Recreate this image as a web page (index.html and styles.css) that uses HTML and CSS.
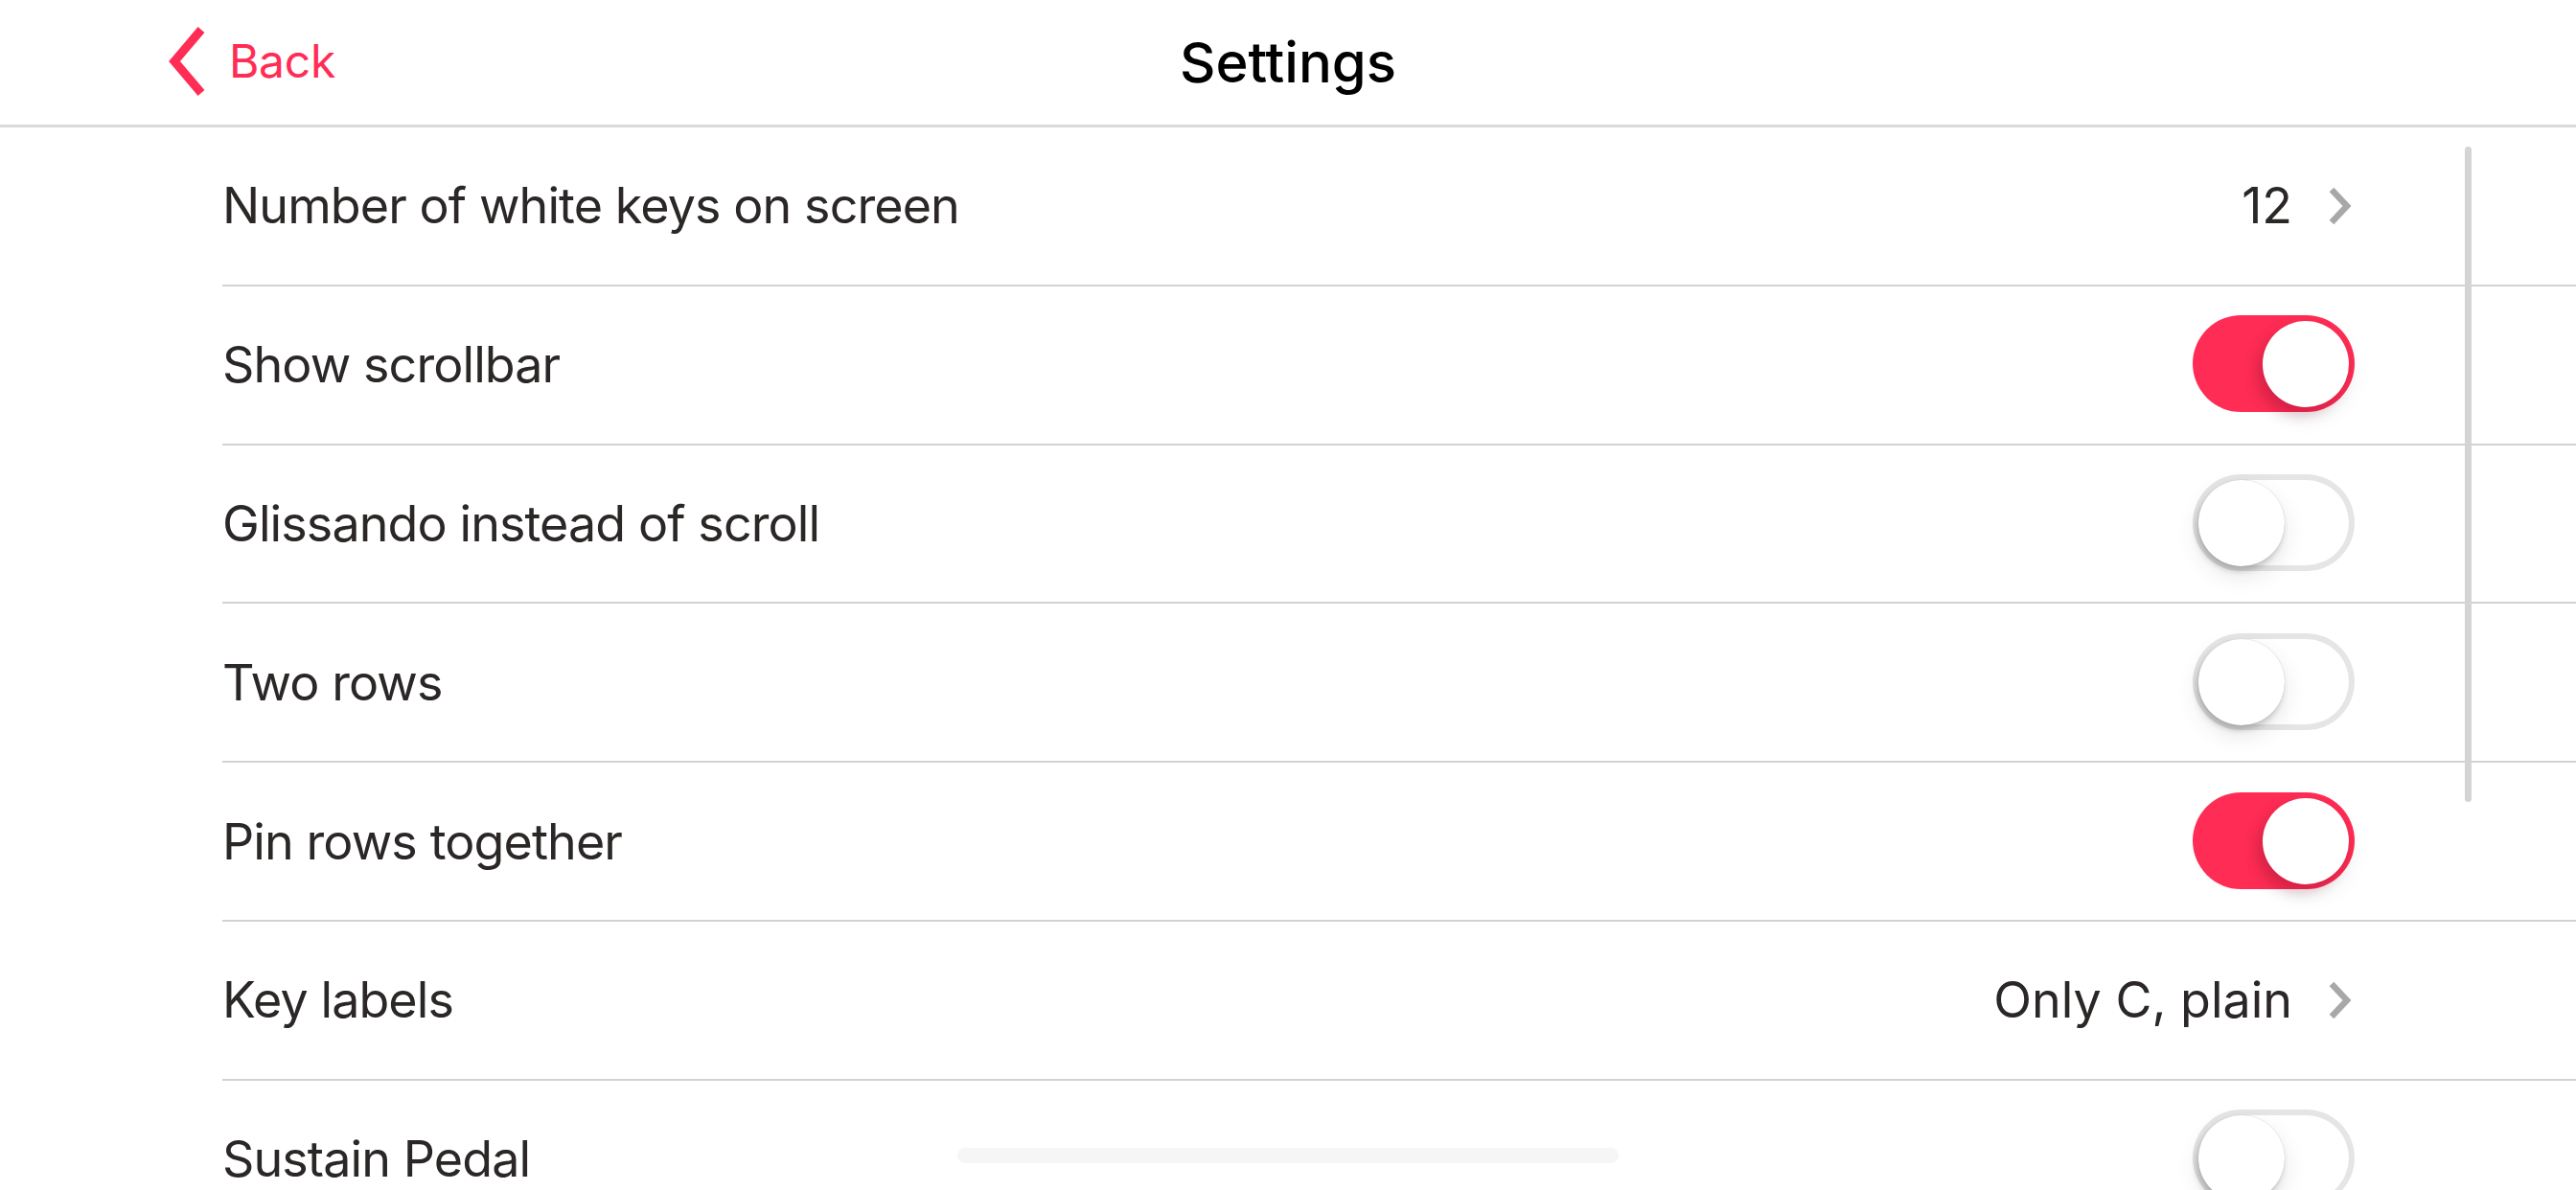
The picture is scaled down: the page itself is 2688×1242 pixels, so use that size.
FILE: index.html
```html
<!DOCTYPE html>
<html>
<head>
<meta charset="utf-8">
<link rel="stylesheet" href="styles.css">
</head>
<body>
<div class="screen">
  <header class="navbar">
    <div class="nav-left">
      <a class="back">
        <svg class="back-chevron" width="50" height="76" viewBox="0 0 50 76"><polyline points="40,5 12,38 40,71" fill="none" stroke="#ff2d55" stroke-width="9"/></svg>
        <span class="back-label">Back</span>
      </a>
    </div>
    <h1 class="title">Settings</h1>
    <div class="nav-right"></div>
  </header>
  <ul class="list">
    <li class="row">
      <span class="label">Number of white keys on screen</span>
      <span class="accessory"><span class="value">12</span><svg class="disclosure" width="30" height="44" viewBox="0 0 30 44"><polyline points="5,5 21,22 5,39" fill="none" stroke="#a8a8a8" stroke-width="6.5"/></svg></span>
    </li>
    <li class="row">
      <span class="label">Show scrollbar</span>
      <span class="switch on"><span class="knob"></span></span>
    </li>
    <li class="row">
      <span class="label">Glissando instead of scroll</span>
      <span class="switch"><span class="knob"></span></span>
    </li>
    <li class="row">
      <span class="label">Two rows</span>
      <span class="switch"><span class="knob"></span></span>
    </li>
    <li class="row">
      <span class="label">Pin rows together</span>
      <span class="switch on"><span class="knob"></span></span>
    </li>
    <li class="row">
      <span class="label">Key labels</span>
      <span class="accessory"><span class="value">Only C, plain</span><svg class="disclosure" width="30" height="44" viewBox="0 0 30 44"><polyline points="5,5 21,22 5,39" fill="none" stroke="#a8a8a8" stroke-width="6.5"/></svg></span>
    </li>
    <li class="row">
      <span class="label">Sustain Pedal</span>
      <span class="switch"><span class="knob"></span></span>
    </li>
  </ul>
  <div class="scroll-indicator"></div>
  <div class="home-indicator"></div>
</div>
</body>
</html>
```
FILE: styles.css
```css
* { box-sizing: border-box; }
html, body { margin: 0; padding: 0; background: #fff; }
body { font-family: Inter, "Noto Sans", sans-serif; }
.screen {
  position: relative;
  width: 2688px;
  height: 1242px;
  overflow: hidden;
  background: #fff;
}
.navbar {
  height: 133px;
  border-bottom: 3px solid #dadada;
  display: grid;
  grid-template-columns: 1fr auto 1fr;
  align-items: center;
}
.nav-left { padding-left: 170px; display: flex; align-items: center; }
.back {
  display: flex;
  align-items: center;
  color: #ff2d55;
  text-decoration: none;
}
.back-chevron { display: block; margin-top: -2px; }
.back-label {
  font-size: 48px;
  font-weight: 400;
  margin-left: 19px;
  margin-top: -4px;
  letter-spacing: -0.3px;
}
.title {
  margin: 0;
  font-size: 58px;
  font-weight: 500;
  color: #000;
  letter-spacing: 0;
  margin-top: 0;
}
.list {
  list-style: none;
  margin: 0;
  padding: 0 0 0 232px;
}
.row {
  height: 165.8px;
  border-bottom: 2px solid #d2d2d2;
  display: flex;
  align-items: center;
  justify-content: space-between;
  padding-right: 231px;
}
.label {
  font-size: 52px;
  color: #2a2726;
  letter-spacing: -0.9px;
  margin-top: 0;
}
.accessory { display: flex; align-items: center; }
.value {
  font-size: 52px;
  color: #2a2726;
  letter-spacing: 0;
  margin-top: 0;
}
.disclosure { display: block; margin-left: 36px; margin-right: -1px; }
.switch {
  position: relative;
  width: 169px;
  height: 101px;
  border-radius: 51px;
  background: #fff;
  box-shadow: inset 0 0 0 6px #e6e5e6;
  margin-top: -2px;
}
.switch.on {
  background: #ff2d55;
  box-shadow: none;
}
.knob {
  position: absolute;
  top: 6px;
  left: 6px;
  width: 90px;
  height: 90px;
  border-radius: 50%;
  background: #fff;
  box-shadow: 0 0 1px rgba(0,0,0,0.25), -2px 5px 6px rgba(0,0,0,0.18), 0 10px 24px rgba(0,0,0,0.10);
}
.switch.on .knob {
  left: 73px;
  box-shadow: -6px 8px 14px rgba(120,0,30,0.22), 0 10px 24px rgba(0,0,0,0.08);
}
.scroll-indicator {
  position: absolute;
  left: 2572px;
  top: 153px;
  width: 7px;
  height: 684px;
  border-radius: 4px;
  background: #d4d4d4;
}
.home-indicator {
  position: absolute;
  left: 999px;
  top: 1198px;
  width: 690px;
  height: 16px;
  border-radius: 8px;
  background: #f6f6f6;
}
```
